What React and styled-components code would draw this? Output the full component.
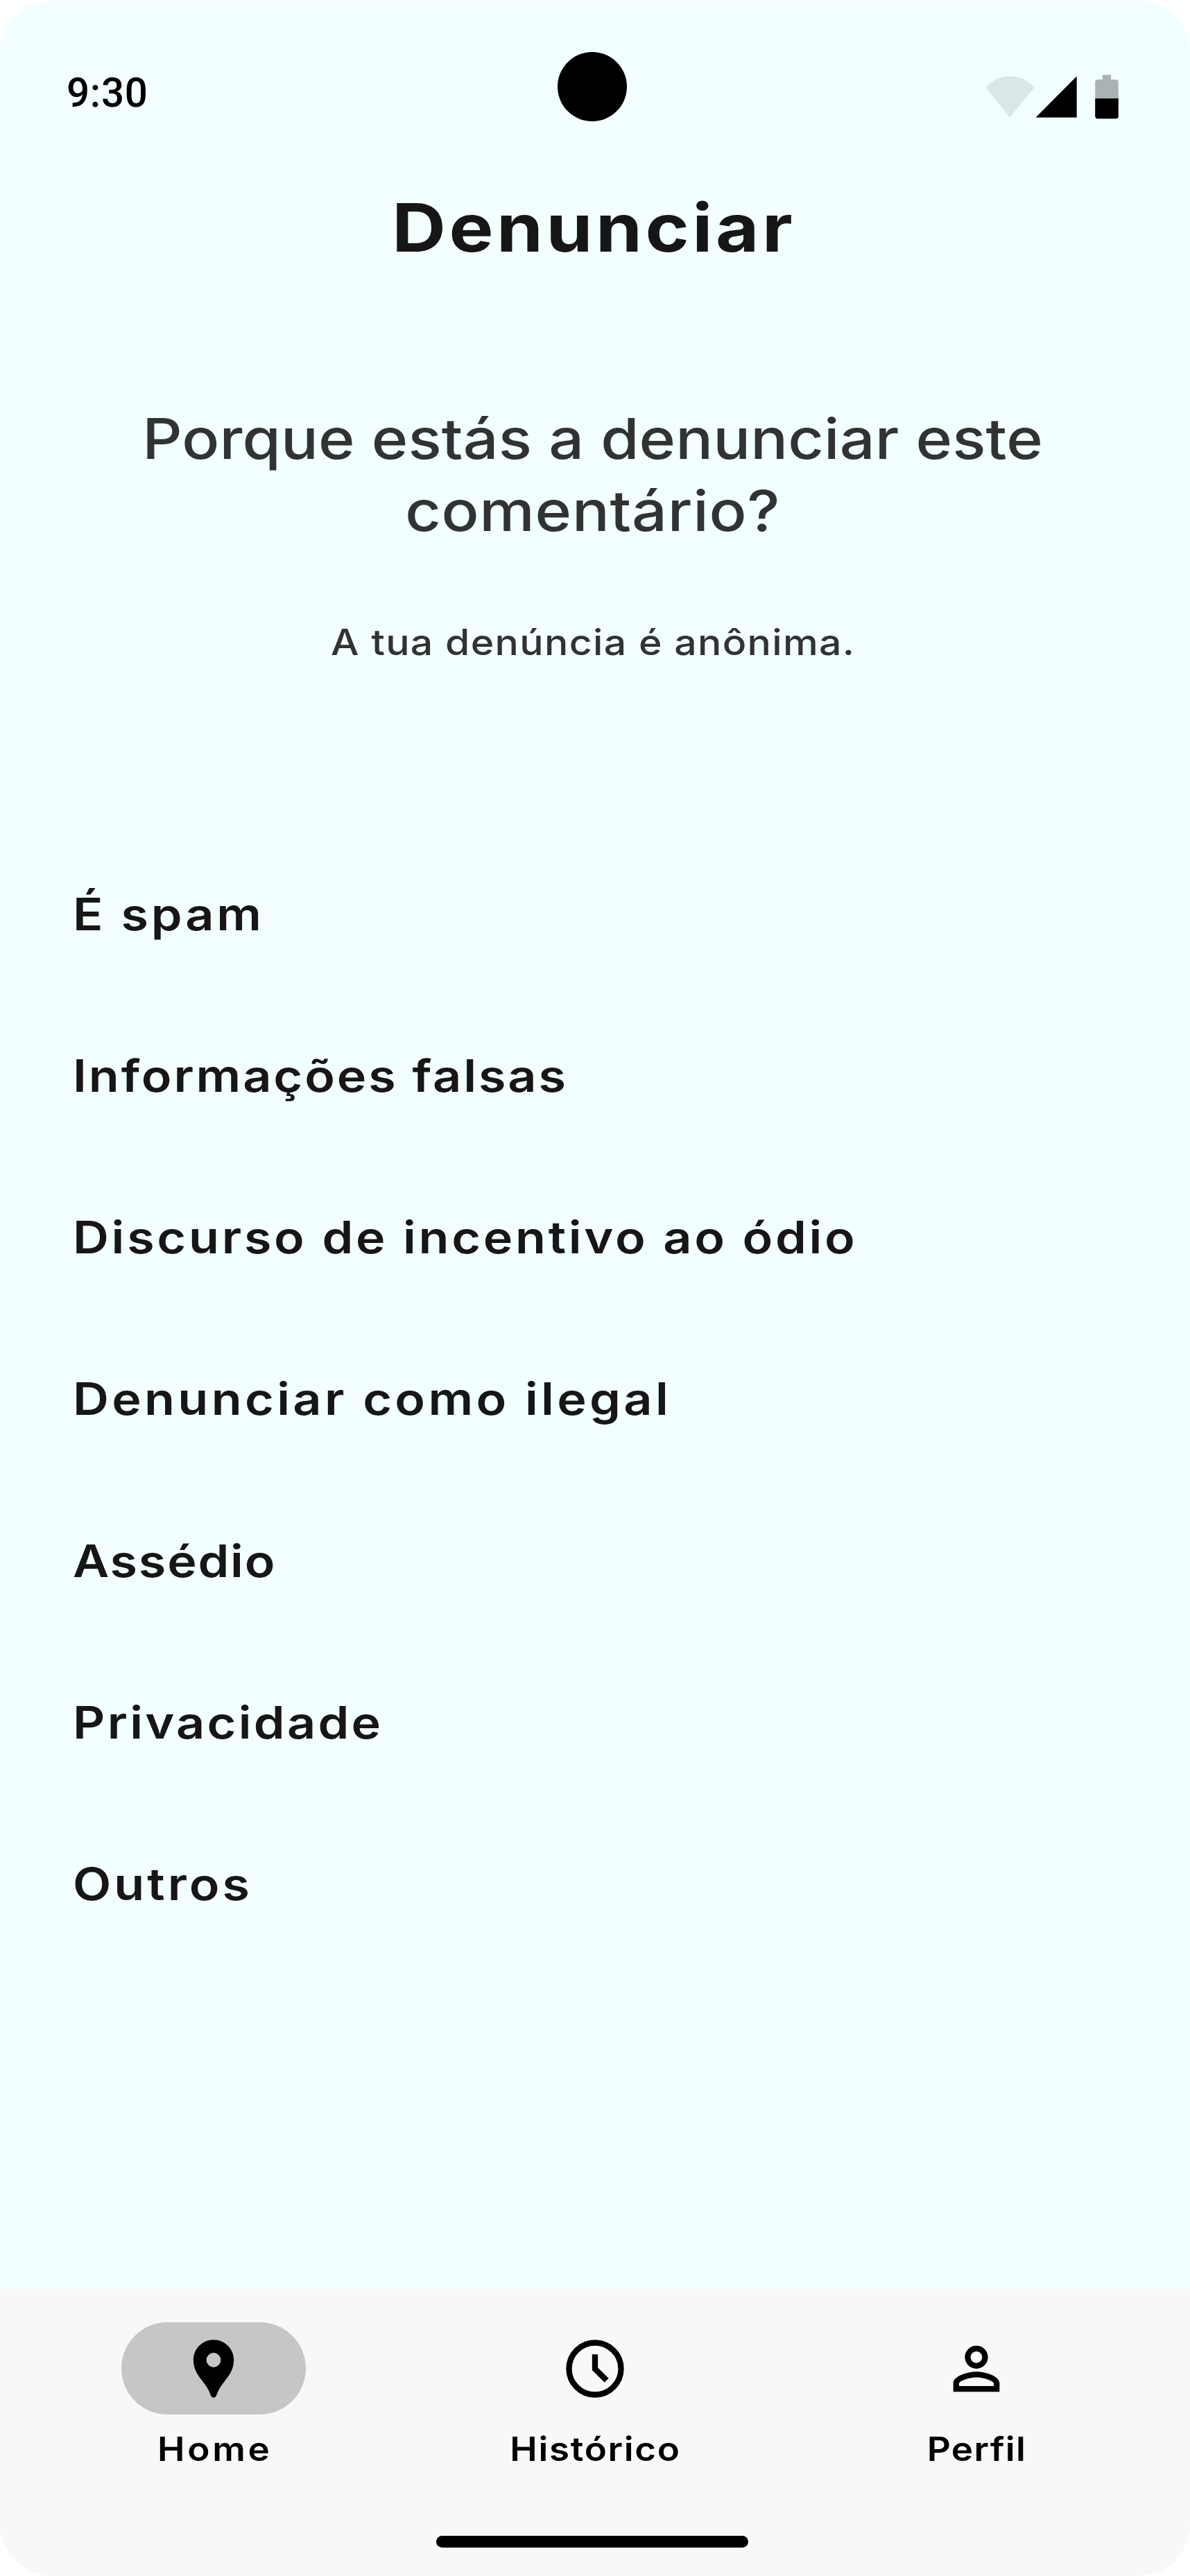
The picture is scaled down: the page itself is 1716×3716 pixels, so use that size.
import React from "react";
import styled, { createGlobalStyle } from "styled-components";

const GlobalStyle = createGlobalStyle`
  *, *::before, *::after { box-sizing: border-box; }
  body { margin: 0; background: #ffffff; }
`;

const Screen = styled.div`
  display: flex;
  flex-direction: column;
  width: 1716px;
  height: 3715px;
  margin-top: 1px;
  overflow: hidden;
  border-radius: 75px;
  background: #f3ffff;
  color: #161616;
  font-family: Inter, "Open Sans", sans-serif;
  font-kerning: normal;
`;

const StatusBar = styled.header`
  display: grid;
  grid-template-columns: 1fr 100px 1fr;
  align-items: start;
  flex: none;
  height: 216px;
  padding: 0 103px 0 96px;
`;

const Time = styled.span`
  margin-top: 92px;
  color: #000000;
  font: 500 58.3px/83px Roboto, sans-serif;
  letter-spacing: 0.7px;
`;

const Camera = styled.span`
  width: 100px;
  height: 100px;
  margin: 74px 0 0 -0.5px;
  border-radius: 50%;
  background: #000000;
`;

const StatusIcons = styled.svg`
  justify-self: end;
  display: block;
  width: 192px;
  height: 64px;
  margin-top: 107px;
`;

const Main = styled.main`
  display: flex;
  flex-direction: column;
  flex: 1;
`;

const Title = styled.h1`
  margin: 51px 0 0;
  padding-right: 3px;
  font-size: 96px;
  font-weight: 700;
  line-height: 120px;
  letter-spacing: 4.06px;
  text-align: center;
  transform: scaleX(1.12);
`;

const Question = styled.h2`
  margin: 193px 0 0;
  padding-right: 6px;
  color: #313333;
  font-size: 80.7px;
  font-weight: 500;
  line-height: 104.3px;
  text-align: center;
  transform: scaleX(1.11);
`;

const Line = styled.span`
  display: block;
  letter-spacing: ${({ $tracking }) => $tracking}px;
`;

const Note = styled.p`
  margin: 102px 0 0;
  padding-right: 5px;
  color: #313333;
  font-size: 52px;
  font-weight: 500;
  line-height: 70px;
  letter-spacing: 1.16px;
  text-align: center;
  transform: scaleX(1.1);
`;

const Reasons = styled.ul`
  display: flex;
  flex-direction: column;
  gap: 133.25px;
  margin: 307px 0 0;
  padding: 0 105px;
  list-style: none;
`;

const Reason = styled.li`
  font-size: 64.2px;
  font-weight: 600;
  line-height: 100px;
  letter-spacing: ${({ $tracking }) => $tracking}px;
  white-space: nowrap;
  transform: scaleX(1.12);
  transform-origin: left center;
`;

const Footer = styled.footer`
  display: flex;
  flex-direction: column;
  align-items: center;
  flex: none;
  height: 415.5px;
  background: #f8f8f8;
`;

const Tabs = styled.nav`
  display: grid;
  grid-template-columns: repeat(3, 550px);
  justify-content: center;
  width: 100%;
  padding-top: 49.7px;
`;

const Tab = styled.a`
  display: flex;
  flex-direction: column;
  align-items: center;
  gap: 16px;
  color: #000000;
`;

const Pill = styled.span`
  display: flex;
  align-items: center;
  justify-content: center;
  width: 266.6px;
  height: 133.3px;
  border-radius: 67px;
  background: ${({ $active }) => ($active ? "#c6c6c6" : "transparent")};
`;

const Icon = styled.svg`
  display: block;
  width: 100px;
  height: 100px;
`;

const TabLabel = styled.span`
  padding-left: ${({ $tracking }) => $tracking}px;
  font-size: 48.2px;
  font-weight: 600;
  line-height: 67px;
  letter-spacing: ${({ $tracking }) => $tracking}px;
  transform: scaleX(1.1);
`;

const HomeIndicator = styled.div`
  width: 450px;
  height: 17px;
  margin: 92px 8px 0 0;
  border-radius: 9px;
  background: #000000;
`;

const reasons = [
  { label: "É spam", tracking: 3.46 },
  { label: "Informações falsas", tracking: 2.58 },
  { label: "Discurso de incentivo ao ódio", tracking: 3.31 },
  { label: "Denunciar como ilegal", tracking: 3.85 },
  { label: "Assédio", tracking: 1.6 },
  { label: "Privacidade", tracking: 2.91 },
  { label: "Outros", tracking: 3.6 },
];

const PinIcon = () => (
  <Icon viewBox="0 0 24 24">
    <path
      fill="#000"
      fillRule="evenodd"
      d="M12 2c-3.87 0-7 3.13-7 7 0 1.74.5 3.37 1.41 4.84.95 1.54 2.2 2.86 3.16 4.4.47.75.81 1.45 1.17 2.26.26.55.47 1.5 1.26 1.5s1-.95 1.26-1.5c.36-.81.7-1.51 1.17-2.26.96-1.54 2.21-2.86 3.16-4.4C18.5 12.37 19 10.74 19 9c0-3.87-3.13-7-7-7zm0 9.5a2.5 2.5 0 0 1 0-5 2.5 2.5 0 0 1 0 5z"
    />
  </Icon>
);

const ClockIcon = () => (
  <Icon viewBox="0 0 24 24" fill="none" stroke="#000" strokeWidth="2">
    <circle cx="12" cy="12" r="9" />
    <path d="M12 7v5.08l4 3.96" />
  </Icon>
);

const PersonIcon = () => (
  <Icon viewBox="0 0 24 24">
    <path
      fill="#000"
      d="M12 6c1.1 0 2 .9 2 2s-.9 2-2 2-2-.9-2-2 .9-2 2-2m0 9c2.7 0 5.8 1.29 6 2v1H6v-.99c.2-.72 3.3-2.01 6-2.01m0-11C9.79 4 8 5.79 8 8s1.79 4 4 4 4-1.79 4-4-1.79-4-4-4zm0 9c-2.67 0-8 1.34-8 4v3h16v-3c0-2.66-5.33-4-8-4z"
    />
  </Icon>
);

const tabs = [
  { label: "Home", icon: PinIcon, tracking: 3.35, active: true },
  { label: "Histórico", icon: ClockIcon, tracking: 1.5 },
  { label: "Perfil", icon: PersonIcon, tracking: 1.16 },
];

export default function App() {
  return (
    <>
      <GlobalStyle />
      <Screen>
        <StatusBar>
          <Time>9:30</Time>
          <Camera />
          <StatusIcons viewBox="0 0 192 64">
            <path d="M0 18.3Q14.5 2 35.25 2T70.5 18.3L35.25 61.3Z" fill="#dbe6e6" />
            <path d="M72.5 61.5L131.7 2V61.5Z" fill="#000" />
            <path
              d="M168.7 0H181V6.7H187.7Q191.8 6.7 191.8 10.7V34H158.2V10.7Q158.2 6.7 162.2 6.7H168.7Z"
              fill="#aab3b3"
            />
            <path d="M158.2 34H191.8V59.2Q191.8 63.2 187.8 63.2H162.2Q158.2 63.2 158.2 59.2Z" fill="#000" />
          </StatusIcons>
        </StatusBar>
        <Main>
          <Title>Denunciar</Title>
          <Question>
            <Line $tracking={0.1}>Porque estás a denunciar este</Line>
            <Line $tracking={0.63}>comentário?</Line>
          </Question>
          <Note>A tua denúncia é anônima.</Note>
          <Reasons>
            {reasons.map(({ label, tracking }) => (
              <Reason key={label} $tracking={tracking}>
                {label}
              </Reason>
            ))}
          </Reasons>
        </Main>
        <Footer>
          <Tabs>
            {tabs.map(({ label, icon: TabIcon, tracking, active }) => (
              <Tab key={label}>
                <Pill $active={active}>
                  <TabIcon />
                </Pill>
                <TabLabel $tracking={tracking}>{label}</TabLabel>
              </Tab>
            ))}
          </Tabs>
          <HomeIndicator />
        </Footer>
      </Screen>
    </>
  );
}
